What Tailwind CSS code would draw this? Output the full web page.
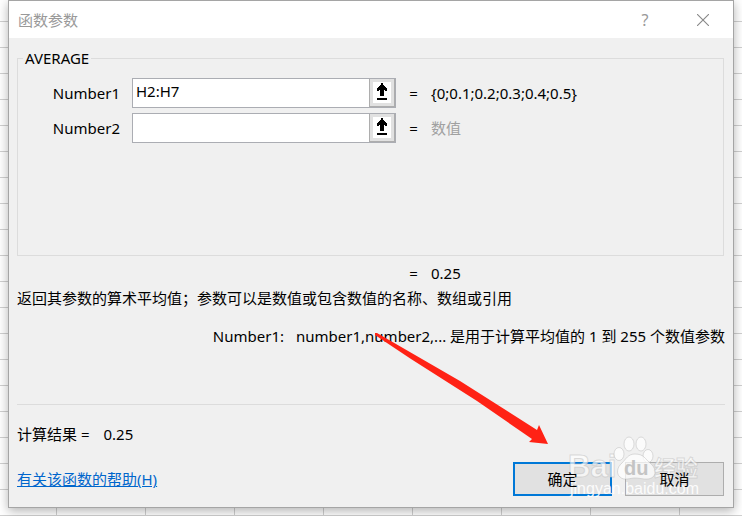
<!DOCTYPE html>
<html lang="zh-CN">

<head>
    <meta charset="UTF-8">
    <meta name="viewport" content="width=device-width, initial-scale=1.0">
    <title>函数参数</title>
    <script src="https://cdn.jsdelivr.net/npm/@tailwindcss/browser@4"></script>
</head>

<body class="relative h-screen overflow-hidden px-2 bg-white bg-[linear-gradient(#d0d0d0_1px,transparent_1px),linear-gradient(90deg,#d0d0d0_1px,transparent_1px)] bg-[size:89px_26px] bg-[position:56px_21px] font-['Noto_Sans','Noto_Sans_CJK_SC',sans-serif] text-[15px] leading-5 text-black">
    <!-- Dialog -->
    <div class="bg-[#f0f0f0] border border-[#a5a5a5] shadow-[0_3px_10px_rgba(0,0,0,0.3)]">
        <div class="flex items-center justify-between h-[37px] bg-white pl-[9px] pr-6 text-[#999999]">
            <h1>函数参数</h1>
            <div class="flex items-center gap-11">
                <button type="button" aria-label="帮助" class="w-4 text-base">?</button>
                <button type="button" aria-label="关闭">
                    <svg class="size-3" viewBox="0 0 12 12" fill="none" stroke="#888" stroke-width="1.1"><path d="M0 0L12 12M12 0L0 12" /></svg>
                </button>
            </div>
        </div>

        <form class="px-2">
            <!-- Arguments -->
            <fieldset class="mt-[10px] mr-px h-[208px] border border-[#dcdcdc]">
                <legend class="ml-[5px] px-[2px]">AVERAGE</legend>
                <div class="flex flex-col gap-[5px] pt-[10px]">
                    <div class="flex items-center">
                        <label for="number1" class="w-[102px] text-right">Number1</label>
                        <div class="ml-3 flex h-[30px] w-[264px] border border-[#abadb3] bg-white">
                            <input id="number1" type="text" value="H2:H7" class="min-w-0 flex-1 px-[3px] pb-1 outline-none">
                            <button type="button" aria-label="选择区域" class="w-[26px] border-l border-r border-b border-[#adadad] bg-[#e1e1e1] p-[3px]">
                                <svg class="h-full w-full bg-white" viewBox="0 0 18 21"><path d="M8 1h2v2h1v1h1v1h1v1h1v3h-2V8h-1v6H7V8H6v1H4V6h1V5h1V4h1V3h1zM4 16h10v2H4z" /></svg>
                            </button>
                        </div>
                        <span class="w-[35px] text-center">=</span>
                        <span>{0;0.1;0.2;0.3;0.4;0.5}</span>
                    </div>
                    <div class="flex items-center">
                        <label for="number2" class="w-[102px] text-right">Number2</label>
                        <div class="ml-3 flex h-[30px] w-[264px] border border-[#abadb3] bg-white">
                            <input id="number2" type="text" class="min-w-0 flex-1 px-[3px] pb-1 outline-none">
                            <button type="button" aria-label="选择区域" class="w-[26px] border-l border-r border-b border-[#adadad] bg-[#e1e1e1] p-[3px]">
                                <svg class="h-full w-full bg-white" viewBox="0 0 18 21"><path d="M8 1h2v2h1v1h1v1h1v1h1v3h-2V8h-1v6H7V8H6v1H4V6h1V5h1V4h1V3h1zM4 16h10v2H4z" /></svg>
                            </button>
                        </div>
                        <span class="w-[35px] text-center">=</span>
                        <span class="text-[#a0a0a0]">数值</span>
                    </div>
                </div>
            </fieldset>

            <!-- Preview and description -->
            <div class="mt-[7px] flex pl-[379px]">
                <span class="w-[35px] text-center">=</span>
                <output>0.25</output>
            </div>
            <p class="mt-[5px]">返回其参数的算术平均值；参数可以是数值或包含数值的名称、数组或引用</p>
            <div class="mt-[18px] flex justify-end gap-3 whitespace-nowrap">
                <span>Number1:</span>
                <span>number1,number2,... 是用于计算平均值的 1 到 255 个数值参数</span>
            </div>
            <hr class="mt-[58px] border-[#dcdcdc]">

            <div class="mt-[19px] flex gap-[14px]">
                <span>计算结果 =</span>
                <output>0.25</output>
            </div>
            <div class="mt-[18px] flex items-center justify-between pb-[11px]">
                <a href="#" class="text-[#0066cc] underline">有关该函数的帮助(H)</a>
                <div class="mr-px flex gap-[13px]">
                    <button type="submit" class="h-[34px] w-[99px] border-2 border-[#0078d7] bg-[#e1e1e1]"><span class="relative z-10">确定</span></button>
                    <button type="button" class="h-[34px] w-[99px] border border-[#adadad] bg-[#e1e1e1]"><span class="relative z-10">取消</span></button>
                </div>
            </div>
        </form>
    </div>

    <!-- Arrow -->
    <svg class="pointer-events-none absolute top-[333px] left-[375px]" width="174" height="112" viewBox="0 0 174 112">
        <path d="M0 0L2 0L85 48L162 97L164 92L173 111L154 109L157 106L102 68L36 26L0 2Z" fill="#ff2215" />
    </svg>

    <!-- Watermark -->
    <svg class="pointer-events-none absolute top-[432px] left-[566px]" width="140" height="70" viewBox="0 0 140 70" fill="#fff" fill-opacity="0.7" stroke="#bbb" stroke-opacity="0.5" font-family="'Liberation Sans','Noto Sans CJK SC',sans-serif">
        <text x="2" y="45" font-size="31" font-weight="700">Bai</text>
        <ellipse cx="53" cy="22" rx="5" ry="6.5" />
        <ellipse cx="63" cy="12" rx="5" ry="7" />
        <ellipse cx="75" cy="12" rx="5" ry="7" />
        <ellipse cx="82" cy="24" rx="5" ry="6.5" />
        <path d="M69 22C62 22 60 27 56 31C51 35 50 42 54 45C58 49 64 46 69 46C75 46 82 49 87 45C91 41 89 35 84 31C79 27 78 22 69 22Z" />
        <text x="58" y="43" font-size="20" font-weight="700" fill="#c4c4c4" fill-opacity="1" stroke="none">du</text>
        <text x="88" y="44" font-size="22" font-weight="700">经验</text>
        <text x="4" y="62" font-size="16" fill-opacity="0.9" stroke="none">jingyan.baidu.com</text>
    </svg>
</body>

</html>
